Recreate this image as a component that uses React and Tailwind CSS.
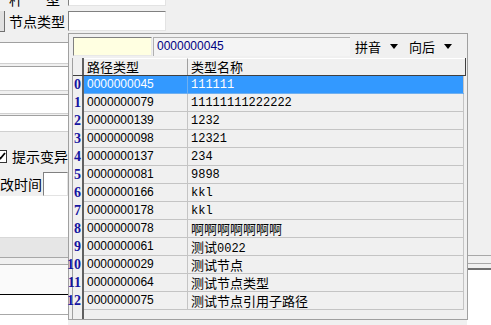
import React from "react";

const rows = [
	["0000000045", "111111"],
	["0000000079", "11111111222222"],
	["0000000139", "1232"],
	["0000000098", "12321"],
	["0000000137", "234"],
	["0000000081", "9898"],
	["0000000166", "kkl"],
	["0000000178", "kkl"],
	["0000000078", "啊啊啊啊啊啊啊"],
	["0000000061", "测试0022"],
	["0000000029", "测试节点"],
	["0000000064", "测试节点类型"],
	["0000000075", "测试节点引用子路径"],
];

// split into latin / cjk runs so each gets its own font
const splitRuns = (text) => {
	const runs = [];
	for (const ch of text) {
		const cjk = /[\u3000-\u9fff]/.test(ch);
		const last = runs[runs.length - 1];
		if (last && last.cjk === cjk) last.text += ch;
		else runs.push({ cjk, text: ch });
	}
	return runs;
};

const NameCell = ({ text }) => (
	<>
		{splitRuns(text).map((run, i) =>
			run.cjk ? (
				<span key={i} className="font-['Noto_Sans_CJK_SC',sans-serif] text-[13px]">
					{run.text}
				</span>
			) : (
				<span key={i} className="font-['Liberation_Mono',monospace] text-[12px]">
					{run.text}
				</span>
			),
		)}
	</>
);

const Sunken = ({ className = "" }) => (
	<div
		className={`border border-t-[#808080] border-l-[#808080] border-r-[#e3e3e3] border-b-[#e3e3e3] bg-white ${className}`}
	/>
);

const Arrow = () => (
	<svg width="8" height="5" viewBox="0 0 8 5" className="mx-[9px]">
		<path d="M0 0H8L4 5Z" fill="#000" />
	</svg>
);

const App = () => {
	return (
		<div className="relative w-[491px] h-[325px] overflow-hidden bg-[#f0f0f0] text-black font-['Noto_Sans_CJK_SC',sans-serif]">
			{/* form behind the dropdown */}
			<div className="flex flex-col">
				<div className="flex items-end h-[6px]">
					<div className="w-[68px] h-[22px] -mb-[1px] flex items-end pl-[9px] pr-[8px] justify-between text-[14px] leading-[16px]">
						<span>杆</span>
						<span>型</span>
					</div>
					<Sunken className="w-[98px] h-[20px] self-end -mt-[15px]" />
				</div>

				<div className="flex items-center h-[22px] mt-[4px]">
					<div className="w-[5px] h-[21px] border-r border-b border-[#707070] bg-[#e1e1e1]" />
					<span className="w-[63px] pl-[4px] text-[14px] leading-[16px]">节点类型</span>
					<Sunken className="w-[98px] h-[20px]" />
				</div>

				<div className="flex mt-[1px]">
					<div className="w-[68px] flex flex-col">
						<div className="h-[9px]" />
						<div className="h-[21px] bg-white border-t border-[#a0a0a0]" />
						<div className="h-[3px] border-t border-[#d0d0d0]" />
						<div className="h-[24px] bg-white border-t border-[#a0a0a0]" />
						<div className="h-[4px] border-t border-[#d0d0d0]" />
						<div className="h-[19px] bg-white border-t border-[#a0a0a0]" />
						<div className="h-[2px] border-t border-[#d0d0d0]" />
						<div className="h-[16px] bg-white border-t border-[#a0a0a0]" />
						<div className="h-[14px] border-t border-[#d0d0d0]" />
						<div className="h-[22px] flex items-center -ml-[4px] gap-[5px]">
							<div className="w-[13px] h-[13px] bg-white border border-[#333] flex items-center justify-center">
								<svg width="9" height="8" viewBox="0 0 9 8">
									<path d="M1 4L3.5 6.5L8 1" stroke="#000" strokeWidth="1.8" fill="none" />
								</svg>
							</div>
							<span className="text-[14px] leading-[16px] whitespace-nowrap">提示变异</span>
						</div>
						<div className="h-[5px]" />
						<div className="h-[24px] flex items-center">
							<span className="w-[43px] text-[14px] leading-[16px] whitespace-nowrap">改时间</span>
							<Sunken className="flex-1 h-[24px] bg-[#f0f0f0]" />
						</div>
						<div className="h-[41px] bg-white" />
						<div className="h-[20px] bg-[#e6e6e6] border-t border-[#d8d8d8]" />
						<div className="h-[7px] border-t border-[#a8a8a8] bg-[#f0f0f0]" />
						<div className="h-[30px] border-t border-[#a8a8a8] bg-[#fafafa]" />
						<div className="h-[20px] border-t border-black bg-white" />
						<div className="h-[12px] border-t border-[#a8a8a8] bg-white" />
					</div>
					<div className="flex-1" />
					<div className="w-[24px] flex flex-col">
						<div className="h-[222px]" />
						<div className="h-[8px] border-t border-[#a8a8a8]" />
						<div className="h-[5px] border-t border-[#a8a8a8]" />
						<div className="h-[60px] border-t-2 border-[#707070] bg-white" />
					</div>
				</div>
			</div>

			{/* dropdown */}
			<div className="absolute left-[68px] top-[33px] w-[400px] h-[287px] border border-[#a0a0a0] bg-[#f0f0f0] flex flex-col">
				<div className="flex items-center h-[23px] pl-[4px] pt-[2px]">
					<div className="w-[79px] h-[19px] bg-[#ffffe1] border border-t-[#808080] border-l-[#808080] border-r-[#e8e8e8] border-b-[#e8e8e8]" />
					<div className="ml-[1px] w-[197px] h-[19px] border-l border-t border-[#b0b0b0] bg-[#f4f4f4] pl-[3px] text-[#000080] font-['Liberation_Sans',sans-serif] text-[12px] leading-[17px]">
						0000000045
					</div>
					<div className="flex items-center ml-[5px] text-[13px] leading-[16px]">
						<span>拼音</span>
						<Arrow />
						<span className="ml-[2px]">向后</span>
						<Arrow />
					</div>
				</div>

				<div className="ml-[3px] mt-[1px] w-[394px] flex-1 border-l border-[#a0a0a0] flex flex-col">
					<div className="flex h-[18px] border-b border-[#404040] border-r border-r-[#404040]">
						<div className="w-[11px] border-r-2 border-[#606060]" />
						<div className="w-[104px] border-r border-[#a0a0a0] border-t border-t-white pl-[3px] text-[13px] leading-[16px]">
							路径类型
						</div>
						<div className="flex-1 border-t border-white pl-[3px] text-[13px] leading-[16px]">
							类型名称
						</div>
					</div>
					{rows.map(([code, name], i) => {
						const selected = i === 0;
						return (
							<div key={code} className="flex h-[18px]">
								<div className="w-[11px] border-r-2 border-[#606060] relative">
									<span className="absolute right-[1px] top-0 font-['Liberation_Serif',serif] font-bold text-[14px] leading-[18px] text-[#1414a0]">
										{i}
									</span>
								</div>
								<div
									className={`flex flex-1 mr-[2px] border-b ${
										selected
											? "bg-[#3399ff] text-white border-[#70b0f0]"
											: "border-[#c4c4c4]"
									}`}
								>
									<div
										className={`w-[104px] border-r pl-[3px] font-['Liberation_Sans',sans-serif] text-[12px] leading-[17px] ${
											selected ? "border-[#70b0f0]" : "border-[#c4c4c4]"
										}`}
									>
										{code}
									</div>
									<div className="flex-1 pl-[3px] font-['Liberation_Sans',sans-serif] text-[12px] leading-[17px] whitespace-nowrap border-r border-[#c4c4c4]">
										<NameCell text={name} />
									</div>
								</div>
							</div>
						);
					})}
					<div className="flex flex-1">
						<div className="w-[11px] border-r-2 border-[#606060]" />
					</div>
				</div>
			</div>
		</div>
	);
};

export default App;
